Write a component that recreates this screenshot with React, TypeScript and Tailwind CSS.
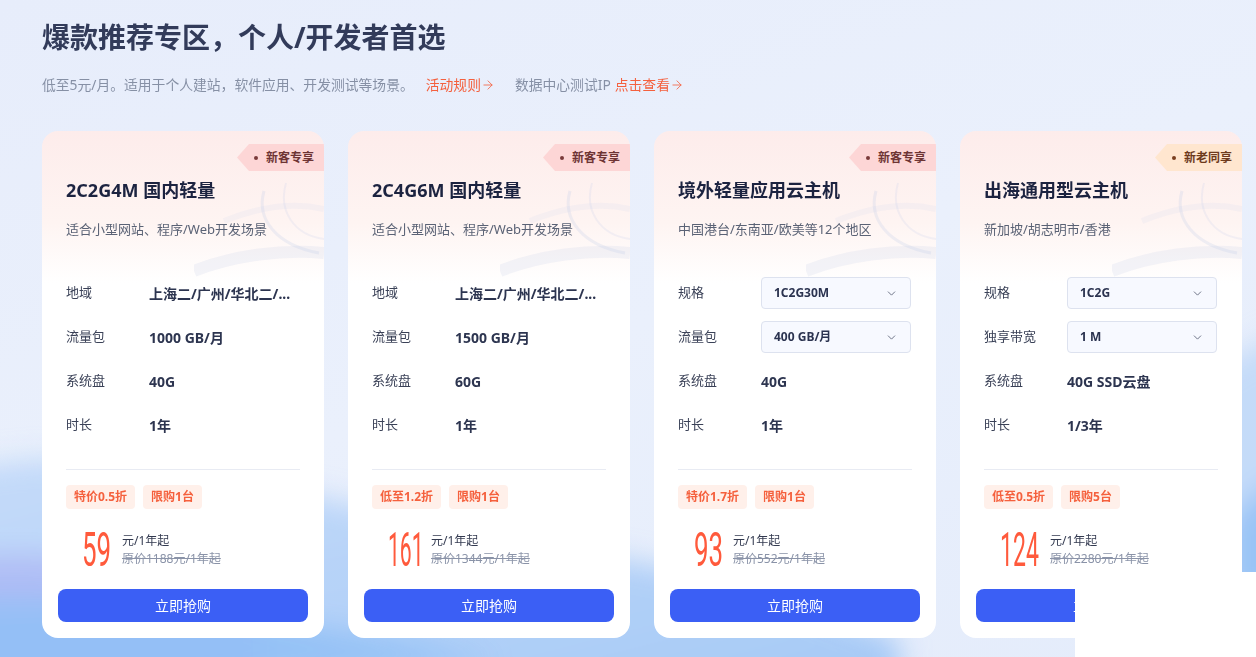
import React from 'react';
import { ChevronDown, ArrowRight } from 'lucide-react';

type Row = { label: string; value: string; select?: boolean };

type Plan = {
  name: string;
  desc: string;
  badge: string;
  badgeTone: 'pink' | 'peach';
  rows: Row[];
  tags: string[];
  price: string;
  priceBox: string;
  priceScale: string;
  original: string;
};

const plans: Plan[] = [
  {
    name: '2C2G4M 国内轻量',
    desc: '适合小型网站、程序/Web开发场景',
    badge: '新客专享',
    badgeTone: 'pink',
    rows: [
      { label: '地域', value: '上海二/广州/华北二/...' },
      { label: '流量包', value: '1000 GB/月' },
      { label: '系统盘', value: '40G' },
      { label: '时长', value: '1年' },
    ],
    tags: ['特价0.5折', '限购1台'],
    price: '59',
    priceBox: 'w-[38px]',
    priceScale: 'scale-x-[0.54]',
    original: '原价1188元/1年起',
  },
  {
    name: '2C4G6M 国内轻量',
    desc: '适合小型网站、程序/Web开发场景',
    badge: '新客专享',
    badgeTone: 'pink',
    rows: [
      { label: '地域', value: '上海二/广州/华北二/...' },
      { label: '流量包', value: '1500 GB/月' },
      { label: '系统盘', value: '60G' },
      { label: '时长', value: '1年' },
    ],
    tags: ['低至1.2折', '限购1台'],
    price: '161',
    priceBox: 'w-[41px]',
    priceScale: 'scale-x-[0.44]',
    original: '原价1344元/1年起',
  },
  {
    name: '境外轻量应用云主机',
    desc: '中国港台/东南亚/欧美等12个地区',
    badge: '新客专享',
    badgeTone: 'pink',
    rows: [
      { label: '规格', value: '1C2G30M', select: true },
      { label: '流量包', value: '400 GB/月', select: true },
      { label: '系统盘', value: '40G' },
      { label: '时长', value: '1年' },
    ],
    tags: ['特价1.7折', '限购1台'],
    price: '93',
    priceBox: 'w-[37px]',
    priceScale: 'scale-x-[0.54]',
    original: '原价552元/1年起',
  },
  {
    name: '出海通用型云主机',
    desc: '新加坡/胡志明市/香港',
    badge: '新老同享',
    badgeTone: 'peach',
    rows: [
      { label: '规格', value: '1C2G', select: true },
      { label: '独享带宽', value: '1 M', select: true },
      { label: '系统盘', value: '40G SSD云盘' },
      { label: '时长', value: '1/3年' },
    ],
    tags: ['低至0.5折', '限购5台'],
    price: '124',
    priceBox: 'w-[48px]',
    priceScale: 'scale-x-[0.48]',
    original: '原价2280元/1年起',
  },
];

const CardSwirl: React.FC = () => (
  <svg className="absolute right-0 top-[40px] w-[130px] h-[110px] pointer-events-none" viewBox="0 0 130 110" fill="none">
    <path d="M0 100 C40 84 90 78 130 82" stroke="#c9d3ea" strokeOpacity="0.22" strokeWidth="12" />
    <path d="M30 50 C60 38 95 30 130 38" stroke="#d7def0" strokeOpacity="0.2" strokeWidth="6" />
    <path d="M70 20 C62 48 82 74 125 82" stroke="#bfcbe6" strokeOpacity="0.25" strokeWidth="3" />
    <path d="M92 12 C84 40 100 64 130 68" stroke="#c4cfe9" strokeOpacity="0.2" strokeWidth="2" />
  </svg>
);

const PlanCard: React.FC<{ plan: Plan }> = ({ plan }) => {
  const badgeBg = plan.badgeTone === 'pink' ? 'bg-[#fdd6d6] text-[#6e3434]' : 'bg-[#ffe6cf] text-[#6e3a1c]';
  const dot = plan.badgeTone === 'pink' ? 'bg-[#7a3a3a]' : 'bg-[#7a3f1f]';
  return (
    <div className="relative w-[282px] h-[507px] shrink-0 rounded-2xl overflow-hidden bg-[linear-gradient(180deg,#fdeceb_0%,#fef4f2_18%,#ffffff_30%)] px-6 pt-[46px] pb-4 flex flex-col">
      <CardSwirl />
      <div
        className={`absolute right-0 top-[13px] h-[27px] pl-[17px] pr-[10px] flex items-center gap-[8px] text-[12px] font-bold [clip-path:polygon(12px_0,100%_0,100%_100%,12px_100%,0_50%)] ${badgeBg}`}
      >
        <span className={`w-[4px] h-[4px] rounded-full ${dot}`} />
        <span>{plan.badge}</span>
      </div>

      <h2 className="relative text-[18px] leading-[26px] font-bold text-[#1c2340]">{plan.name}</h2>
      <p className="relative mt-4 text-[13px] leading-5 text-[#5a6275]">{plan.desc}</p>

      <div className="relative mt-8 flex flex-col">
        {plan.rows.map((row) => (
          <div key={row.label} className="h-11 flex items-center">
            <span className="w-[83px] shrink-0 text-[13px] text-[#3a4157]">{row.label}</span>
            {row.select ? (
              <div className="w-[150px] h-8 px-3 flex items-center justify-between bg-[#f7f9ff] border border-[#dde2ef] rounded-sm">
                <span className="text-[12px] font-bold text-[#2b3350]">{row.value}</span>
                <ChevronDown size={13} strokeWidth={1.6} className="text-[#5b6377]" />
              </div>
            ) : (
              <span className="min-w-0 flex-1 whitespace-nowrap text-[14px] font-bold text-[#2d3550]">{row.value}</span>
            )}
          </div>
        ))}
      </div>

      <div className="mt-[22px] h-px bg-[#e8ebf3]" />

      <div className="mt-[15px] flex gap-2">
        {plan.tags.map((t) => (
          <span key={t} className="h-6 px-2 flex items-center rounded-sm bg-[#fff0ea] text-[12px] font-bold text-[#f5603d]">
            {t}
          </span>
        ))}
      </div>

      <div className="mt-6 h-[34px] pl-4 flex items-center">
        <span className={`${plan.priceBox} shrink-0 h-[34px] overflow-visible`}>
          <span
            className={`inline-block origin-left ${plan.priceScale} font-['Roboto',sans-serif] font-normal text-[48px] leading-[34px] text-[#ff5a3c]`}
          >
            {plan.price}
          </span>
        </span>
        <div className="ml-[2px] flex flex-col text-[12px] leading-[18px]">
          <span className="text-[#333a50]">元/1年起</span>
          <span className="text-[#8a93a8] line-through">{plan.original}</span>
        </div>
      </div>

      <button className="mt-[22px] -mx-2 h-[33px] rounded-lg bg-[#3b5ff5] text-white text-[14px]">立即抢购</button>
    </div>
  );
};

const Backdrop: React.FC = () => (
  <svg className="absolute inset-0 w-full h-full pointer-events-none" viewBox="0 0 1256 657" preserveAspectRatio="none">
    <defs>
      <filter id="soft" x="-20%" y="-20%" width="140%" height="140%">
        <feGaussianBlur stdDeviation="14" />
      </filter>
      <linearGradient id="waveA" x1="0" y1="0" x2="1" y2="1">
        <stop offset="0" stopColor="#b9d4f8" />
        <stop offset="1" stopColor="#8ebcf4" />
      </linearGradient>
    </defs>
    <g filter="url(#soft)">
      <path d="M-40 470 C80 440 200 470 420 520 C600 560 700 560 900 640 L900 700 L-40 700 Z" fill="url(#waveA)" opacity="0.75" />
      <path d="M-40 560 C60 540 140 580 260 610 L260 700 L-40 700 Z" fill="#a6abf2" opacity="0.6" />
      <path d="M-40 600 C100 590 300 620 500 660 L-40 700 Z" fill="#8fc0f6" opacity="0.85" />
      <path d="M1200 380 C1230 360 1260 340 1300 330 L1300 600 L1200 600 Z" fill="#bcd6f7" opacity="0.8" />
      <path d="M1230 520 C1250 500 1270 480 1300 470 L1300 600 L1230 600 Z" fill="#92c0f5" opacity="0.9" />
    </g>
    <path d="M-20 455 C60 440 120 445 200 470" stroke="#ffffff" strokeOpacity="0.5" strokeWidth="4" fill="none" filter="url(#soft)" />
  </svg>
);

export default function App() {
  return (
    <div className="relative w-[1256px] h-[657px] overflow-hidden bg-[linear-gradient(160deg,#e7edfb_0%,#eaf0fc_50%,#e4ecfb_100%)] font-['Noto_Sans','Noto_Sans_CJK_SC',sans-serif]">
      <Backdrop />
      <div className="relative px-[42px] pt-[17px]">
        <h1 className="text-[28px] leading-10 font-bold text-[#323b5a]">爆款推荐专区，个人/开发者首选</h1>
        <p className="mt-[18px] h-5 flex items-center text-[13.8px] text-[#8690a5]">
          <span>低至5元/月。适用于个人建站，软件应用、开发测试等场景。</span>
          <a className="ml-3 flex items-center text-[#f4603e]">
            活动规则
            <ArrowRight size={14} strokeWidth={1.4} />
          </a>
          <span className="ml-5">数据中心测试IP</span>
          <a className="ml-1 flex items-center text-[#f4603e]">
            点击查看
            <ArrowRight size={14} strokeWidth={1.4} />
          </a>
        </p>

        <div className="mt-9 flex gap-6">
          {plans.map((p) => (
            <PlanCard key={p.name} plan={p} />
          ))}
        </div>
      </div>
      <div className="absolute right-0 bottom-0 w-[181px] h-[85px] bg-white" />
    </div>
  );
}
